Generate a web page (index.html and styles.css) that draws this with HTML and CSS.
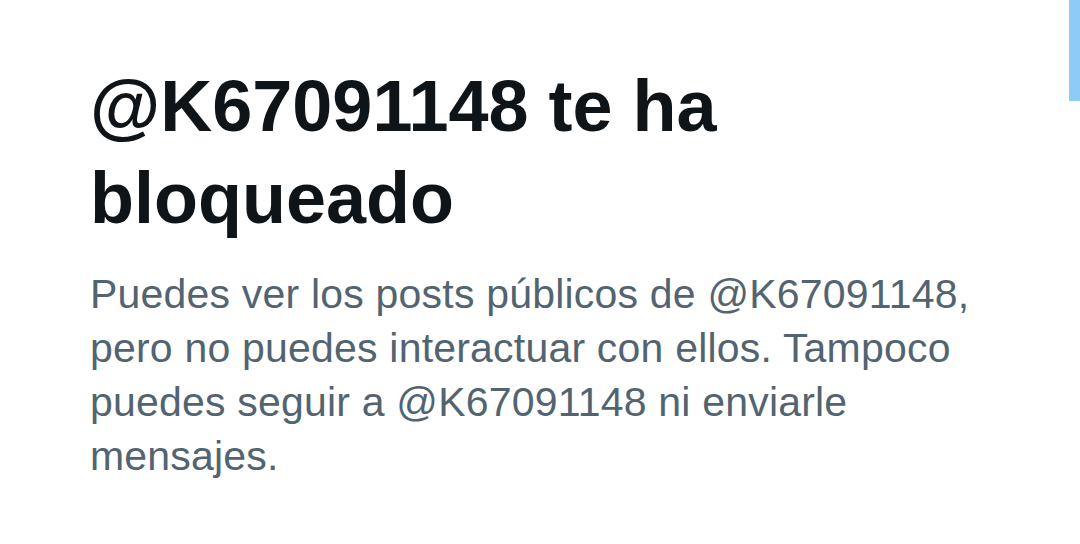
FILE: index.html
```html
<!DOCTYPE html>
<html>
<head>
    <title>Bloqueado</title>
    <meta name="viewport" content="width=device-width, initial-scale=1.0">
    <link rel="stylesheet" href="styles.css">
</head>
<body>
    <div class="scroll-thumb"></div>
    <div id="blocked-notice">
        <h1>@K67091148 te ha bloqueado</h1>
        <p>Puedes ver los posts públicos de @K67091148, pero no puedes interactuar con ellos. Tampoco puedes seguir a @K67091148 ni enviarle mensajes.</p>
    </div>
</body>
</html>
```

FILE: styles.css
```css
/* General styling */
body {
    margin: 0;
    background: #ffffff;
    font-family: "Liberation Sans", Arial, sans-serif;
}

/* Scrollbar thumb on the right edge */
.scroll-thumb {
    position: absolute;
    top: 0;
    right: 0;
    width: 11px;
    height: 101px;
    background-color: #8ecbf5;
}

/* Notice */
#blocked-notice {
    padding: 60px 0 0 90px;
}
h1 {
    margin: 0;
    font-size: 72px;
    line-height: 92px;
    font-weight: bold;
    color: #0f1419;
}
p {
    margin: 23px 0 0;
    font-size: 41px;
    line-height: 54px;
    letter-spacing: 0.2px;
    color: #536471;
    max-width: 900px;
}
```
